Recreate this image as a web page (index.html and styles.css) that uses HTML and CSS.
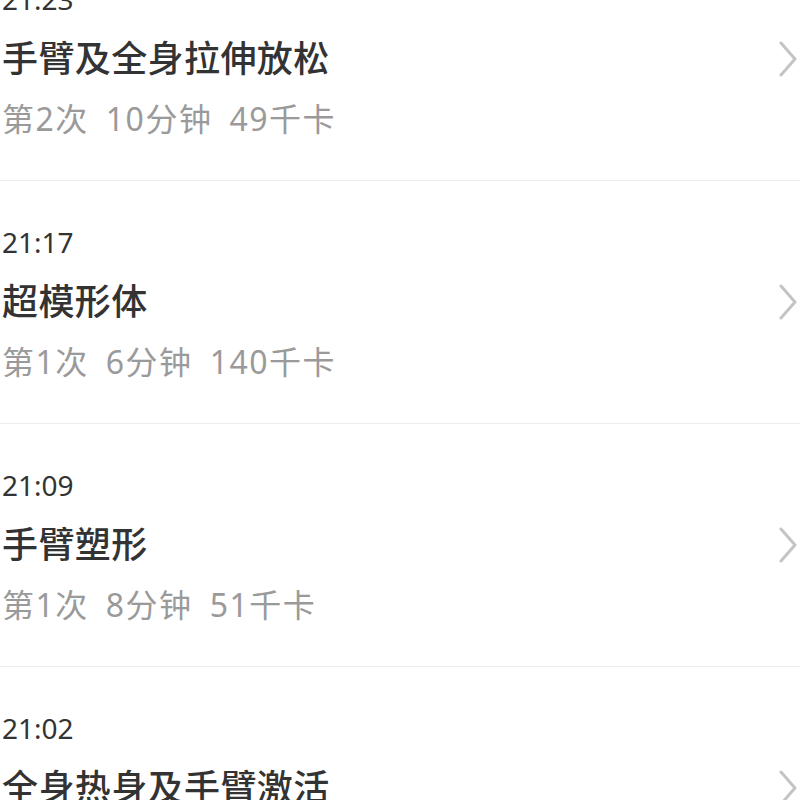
FILE: index.html
```html
<!DOCTYPE html>
<html>
<head>
    <meta charset="utf-8">
    <title>训练记录</title>
    <link rel="stylesheet" href="styles.css">
</head>
<body>
    <ul class="record-list">
        <li class="record">
            <div class="record-info">
                <div class="record-time">21:23</div>
                <div class="record-title">手臂及全身拉伸放松</div>
                <div class="record-meta"><span>第2次</span><span>10分钟</span><span>49千卡</span></div>
            </div>
            <svg class="chevron" viewBox="0 0 18 36" width="18" height="36"><polyline points="2,2 16,18 2,34"/></svg>
        </li>
        <li class="record">
            <div class="record-info">
                <div class="record-time">21:17</div>
                <div class="record-title">超模形体</div>
                <div class="record-meta"><span>第1次</span><span>6分钟</span><span>140千卡</span></div>
            </div>
            <svg class="chevron" viewBox="0 0 18 36" width="18" height="36"><polyline points="2,2 16,18 2,34"/></svg>
        </li>
        <li class="record">
            <div class="record-info">
                <div class="record-time">21:09</div>
                <div class="record-title">手臂塑形</div>
                <div class="record-meta"><span>第1次</span><span>8分钟</span><span>51千卡</span></div>
            </div>
            <svg class="chevron" viewBox="0 0 18 36" width="18" height="36"><polyline points="2,2 16,18 2,34"/></svg>
        </li>
        <li class="record">
            <div class="record-info">
                <div class="record-time">21:02</div>
                <div class="record-title">全身热身及手臂激活</div>
                <div class="record-meta"><span>第1次</span><span>7分钟</span><span>38千卡</span></div>
            </div>
            <svg class="chevron" viewBox="0 0 18 36" width="18" height="36"><polyline points="2,2 16,18 2,34"/></svg>
        </li>
    </ul>
</body>
</html>
```

FILE: styles.css
```css
*, *::before, *::after {
    box-sizing: border-box;
}

body {
    margin: 0;
    background: #fff;
    font-family: "Noto Sans", "Noto Sans CJK SC", sans-serif;
    overflow: hidden;
}

.record-list {
    list-style: none;
    margin: -62px 0 0 0;
    padding: 0;
}

.record {
    display: flex;
    align-items: center;
    padding: 31px 3px 31px 2px;
    border-bottom: 1px solid #ececec;
}

.record-info {
    flex: 1;
}

.record-time {
    font-size: 28px;
    line-height: 60px;
    color: #333;
}

.record-title {
    font-size: 36px;
    line-height: 60px;
    letter-spacing: 0.4px;
    font-weight: 500;
    color: #333;
}

.record-meta {
    display: flex;
    gap: 17px;
    font-size: 32px;
    line-height: 60px;
    letter-spacing: 1.5px;
    color: #9a9a9a;
}

.chevron {
    fill: none;
    stroke: #c4c4c4;
    stroke-width: 3;
    stroke-linecap: round;
    stroke-linejoin: round;
}
```
